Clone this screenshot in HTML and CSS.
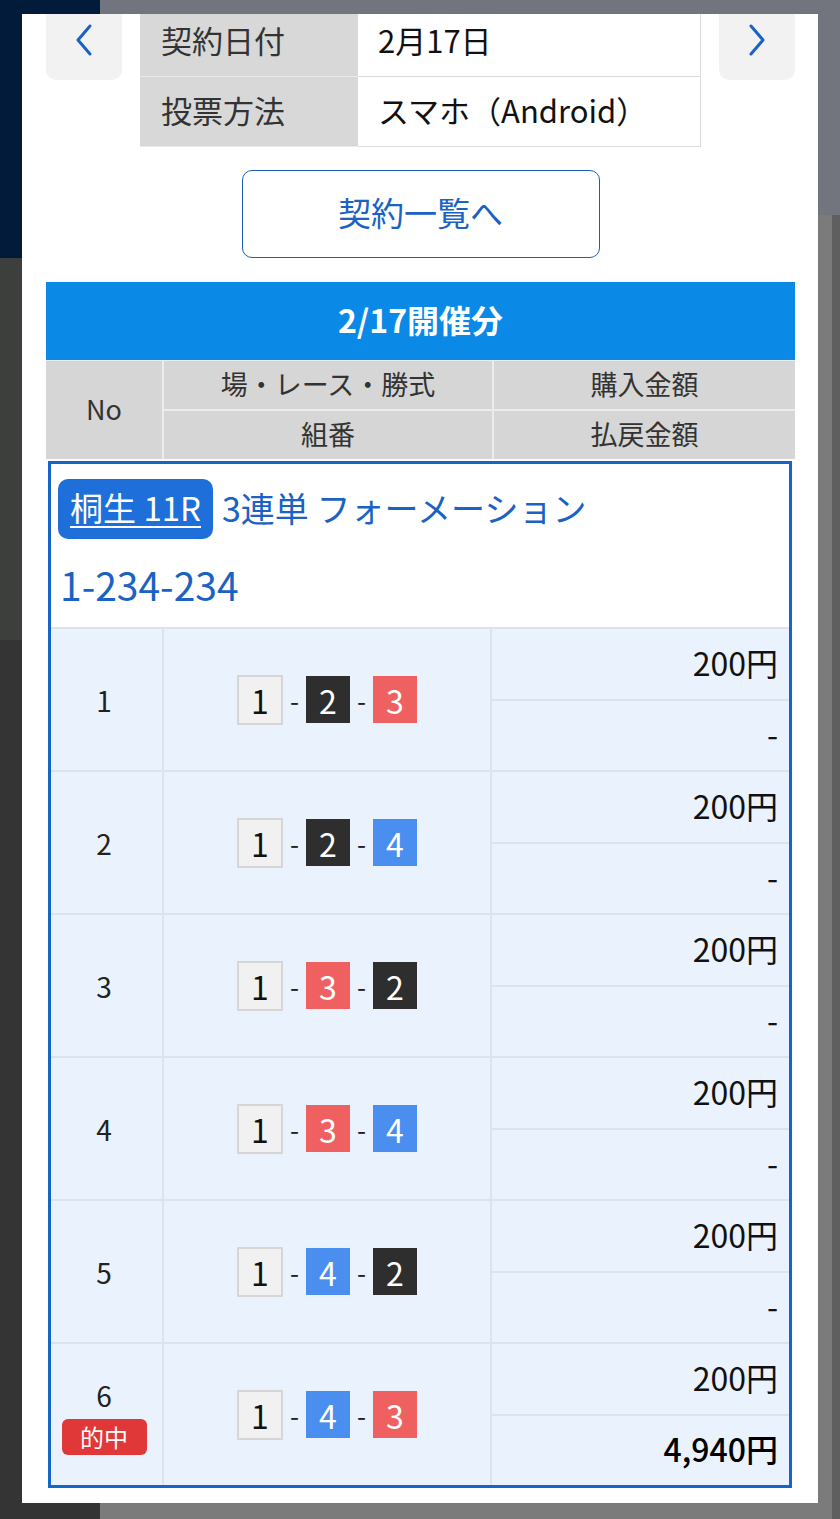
FILE: index.html
```html
<!DOCTYPE html>
<html lang="ja">
<head>
<meta charset="utf-8">
<title>契約詳細</title>
<link rel="stylesheet" href="styles.css">
</head>
<body>
<div class="backdrop">
  <div class="bd-left">
    <div class="bd-navy"></div>
    <div class="bd-dark1"></div>
    <div class="bd-dark2"></div>
  </div>
  <div class="bd-right">
    <div class="bd-top"></div>
    <div class="bd-body"><div class="bd-strip"></div></div>
  </div>
</div>

<div class="modal">
  <div class="modal-inner">
    <div class="nav-row">
      <button class="nav-btn" aria-label="前へ">
        <svg width="22" height="34" viewBox="0 0 22 34"><path d="M17 3 L5 17 L17 31" fill="none" stroke="#1a62c4" stroke-width="3" stroke-linecap="round" stroke-linejoin="round"/></svg>
      </button>
      <table class="info">
        <tr><th>契約日付</th><td>2月17日</td></tr>
        <tr><th>投票方法</th><td>スマホ（Android）</td></tr>
      </table>
      <button class="nav-btn" aria-label="次へ">
        <svg width="22" height="34" viewBox="0 0 22 34"><path d="M5 3 L17 17 L5 31" fill="none" stroke="#1a62c4" stroke-width="3" stroke-linecap="round" stroke-linejoin="round"/></svg>
      </button>
    </div>

    <div class="list-btn-wrap"><a class="list-btn">契約一覧へ</a></div>

    <div class="day-head">2/17開催分</div>

    <div class="grid-head">
      <div class="gh-no">No</div>
      <div class="gh-c">場・レース・勝式</div>
      <div class="gh-c">購入金額</div>
      <div class="gh-c">組番</div>
      <div class="gh-c">払戻金額</div>
    </div>

    <div class="bet">
      <div class="bet-head">
        <div class="bet-title"><a class="place">桐生 11R</a><span class="kind">3連単 フォーメーション</span></div>
        <div class="bet-combo">1-234-234</div>
      </div>

      <div class="row">
        <div class="c-no">1</div>
        <div class="c-combo"><span class="b b1">1</span><span class="sep">-</span><span class="b b2">2</span><span class="sep">-</span><span class="b b3">3</span></div>
        <div class="c-amt"><div class="amt">200円</div><div class="amt">-</div></div>
      </div>
      <div class="row">
        <div class="c-no">2</div>
        <div class="c-combo"><span class="b b1">1</span><span class="sep">-</span><span class="b b2">2</span><span class="sep">-</span><span class="b b4">4</span></div>
        <div class="c-amt"><div class="amt">200円</div><div class="amt">-</div></div>
      </div>
      <div class="row">
        <div class="c-no">3</div>
        <div class="c-combo"><span class="b b1">1</span><span class="sep">-</span><span class="b b3">3</span><span class="sep">-</span><span class="b b2">2</span></div>
        <div class="c-amt"><div class="amt">200円</div><div class="amt">-</div></div>
      </div>
      <div class="row">
        <div class="c-no">4</div>
        <div class="c-combo"><span class="b b1">1</span><span class="sep">-</span><span class="b b3">3</span><span class="sep">-</span><span class="b b4">4</span></div>
        <div class="c-amt"><div class="amt">200円</div><div class="amt">-</div></div>
      </div>
      <div class="row">
        <div class="c-no">5</div>
        <div class="c-combo"><span class="b b1">1</span><span class="sep">-</span><span class="b b4">4</span><span class="sep">-</span><span class="b b2">2</span></div>
        <div class="c-amt"><div class="amt">200円</div><div class="amt">-</div></div>
      </div>
      <div class="row">
        <div class="c-no"><span>6</span><span class="hit">的中</span></div>
        <div class="c-combo"><span class="b b1">1</span><span class="sep">-</span><span class="b b4">4</span><span class="sep">-</span><span class="b b3">3</span></div>
        <div class="c-amt"><div class="amt">200円</div><div class="amt amt-win">4,940円</div></div>
      </div>
    </div>
  </div>
</div>
</body>
</html>
```

FILE: styles.css
```css
* { box-sizing: border-box; }
html, body { margin: 0; padding: 0; }
body {
  width: 840px;
  height: 1519px;
  overflow: hidden;
  position: relative;
  font-family: "Noto Sans CJK JP", "Noto Sans", sans-serif;
  background: #7a7a7a;
}

/* dimmed page behind the dialog */
.backdrop {
  display: grid;
  grid-template-columns: 100px 1fr;
  height: 1519px;
}
.bd-left { display: flex; flex-direction: column; }
.bd-navy { height: 258px; background: #021b3b; }
.bd-dark1 { height: 382px; background: #3d3f3c; }
.bd-dark2 { flex: 1; background: #343434; }
.bd-right { display: flex; flex-direction: column; }
.bd-top { height: 215px; background: #72757e; }
.bd-body { flex: 1; background: #7b7b7b; display: flex; justify-content: flex-end; }
.bd-strip { width: 8px; background: #5f5f5f; }

/* dialog */
.modal {
  position: absolute;
  left: 22px;
  top: 14px;
  width: 796px;
  height: 1489px;
  background: #fff;
  overflow: hidden;
}
.modal-inner {
  margin-top: -8px;
  padding: 0 23px 0 24px;
}

.nav-row {
  display: flex;
  align-items: flex-start;
  gap: 18px;
}
.nav-btn {
  width: 76px;
  height: 80px;
  border: none;
  background: #f2f2f2;
  border-radius: 10px;
  display: flex;
  align-items: center;
  justify-content: center;
  padding: 0;
  margin-top: -6px;
}
.info {
  width: 561px;
  border-collapse: collapse;
  font-size: 31px;
  color: #222;
}
.info th, .info td {
  height: 70px;
  text-align: left;
  font-weight: normal;
  padding: 0 0 4px 20px;
  border: 1px solid #dcdcdc;
}
.info th {
  width: 217px;
  background: #d8d8d8;
  border-color: #eaeaea #d8d8d8;
  color: #333;
}
.info td { color: #111; }

.list-btn-wrap {
  display: flex;
  justify-content: center;
  margin-top: 23px;
}
.list-btn {
  width: 358px;
  height: 88px;
  border: 1.5px solid #1a5fb4;
  border-radius: 10px;
  display: flex;
  align-items: center;
  justify-content: center;
  font-size: 33px;
  color: #1a62c4;
  padding-bottom: 4px;
}

.day-head {
  margin-top: 24px;
  height: 78px;
  background: #0a8ae6;
  color: #fff;
  font-size: 32px;
  font-weight: bold;
  display: flex;
  align-items: center;
  justify-content: center;
  padding-bottom: 4px;
}

.grid-head {
  display: grid;
  grid-template-columns: 116px 328px 1fr;
  grid-template-rows: 48px 48px;
  gap: 2px;
  background: #ececec;
  padding: 1px 0 0;
  font-size: 27px;
  color: #333;
}
.grid-head > div {
  background: #d6d6d6;
  display: flex;
  align-items: center;
  justify-content: center;
  padding-bottom: 3px;
}
.gh-no { grid-row: 1 / 3; }

.bet {
  margin: 2px 3px 0 2px;
  border: 3px solid #1565c8;
}
.bet-head {
  background: #fff;
  padding: 15px 7px 0;
  height: 163px;
}
.bet-title {
  display: flex;
  align-items: center;
  gap: 9px;
  font-size: 34px;
  color: #1a62c4;
}
.place {
  background: #1e6fd9;
  color: #fff;
  border-radius: 10px;
  height: 60px;
  padding: 0 12px 4px;
  display: flex;
  align-items: center;
  font-size: 33px;
  text-decoration: underline;
  text-underline-offset: 5px;
  text-decoration-thickness: 2px;
}
.kind { padding-bottom: 4px; }
.bet-combo {
  margin-top: 20px;
  font-size: 39px;
  color: #1a62c4;
  line-height: 50px;
  padding-left: 2px;
}

.row {
  display: grid;
  grid-template-columns: 111px 328px 1fr;
  height: 143px;
  background: #eaf2fd;
  border-top: 2px solid #dde3ea;
}
.row > div + div { border-left: 2px solid #dde3ea; }
.c-no {
  display: flex;
  flex-direction: column;
  align-items: center;
  justify-content: center;
  font-size: 28px;
  color: #222;
  padding-right: 5px;
}
.hit {
  margin-top: 4px;
  background: #e03838;
  color: #fff;
  font-size: 24px;
  width: 85px;
  height: 36px;
  border-radius: 6px;
  display: flex;
  align-items: center;
  justify-content: center;
}
.c-combo {
  display: flex;
  align-items: center;
  justify-content: center;
}
.b {
  width: 44px;
  height: 47px;
  display: flex;
  align-items: center;
  justify-content: center;
  font-size: 32px;
  color: #fff;
}
.b1 { background: #f1f1f1; border: 2px solid #d6d6d6; color: #111; width: 46px; height: 50px; }
.b2 { background: #2e2e2e; }
.b3 { background: #ef6161; }
.b4 { background: #4a8ef0; }
.sep { width: 23px; text-align: center; font-size: 26px; color: #222; }
.c-amt { display: flex; flex-direction: column; }
.amt {
  flex: 1;
  display: flex;
  align-items: center;
  justify-content: flex-end;
  padding: 0 11px 4px 0;
  font-size: 32px;
  color: #111;
}
.amt + .amt { border-top: 2px solid #dde3ea; }
.amt-win { font-weight: 500; color: #000; }
```
